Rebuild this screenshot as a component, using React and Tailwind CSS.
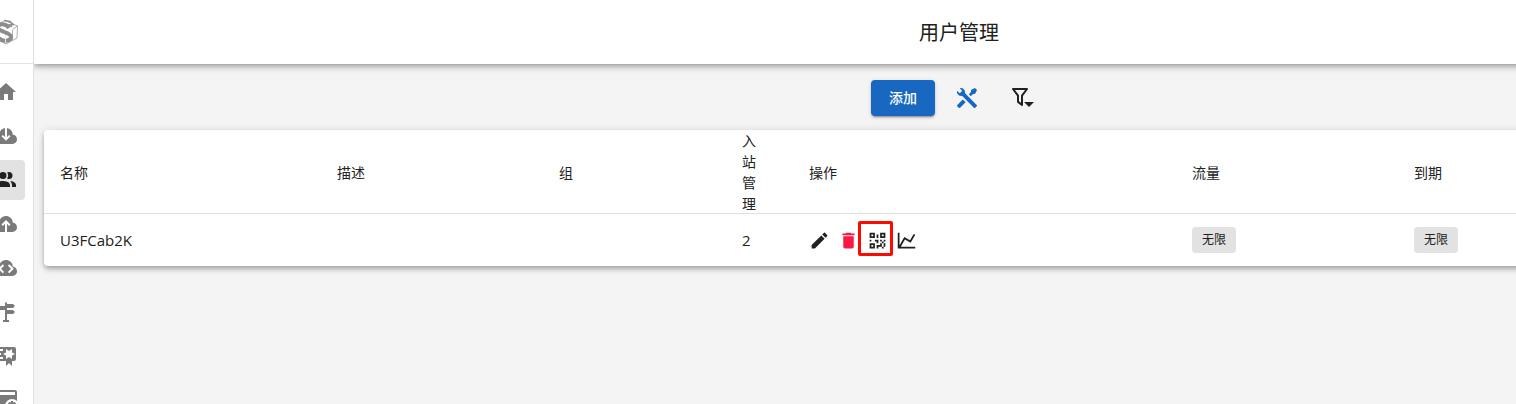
import React from "react";
import clsx from "clsx";

function Icon({ path, className = "size-6", children }) {
  return (
    <svg viewBox="0 0 24 24" fill="currentColor" className={clsx("block shrink-0", className)} aria-hidden="true">
      {path && <path d={path} />}
      {children}
    </svg>
  );
}

function CloudIcon({ mark }) {
  return (
    <Icon>
      <path d="M18.6 9.2C17.9 6.2 15.2 4 12 4C8.8 4 6.2 6.1 5.4 9.1C3 9.4 1 11.6 1 14.4A5.6 5.6 0 0 0 6.5 20H18.5A4.6 4.6 0 0 0 23 15.3C23 12.7 21.1 10.8 18.6 10.5Z" />
      <path d={mark} fill="none" stroke="#fff" strokeWidth="2" />
    </Icon>
  );
}

const navItems = [
  {
    label: "主页",
    icon: <Icon path="M10,20V14H14V20H19V12H22L12,3L2,12H5V20H10Z" />,
  },
  { label: "入站管理", icon: <CloudIcon mark="M12 3V15M8.2 11.6L12 15.4L15.8 11.6" /> },
  {
    label: "用户管理",
    active: true,
    icon: (
      <Icon path="M13.07 10.41A5 5 0 0 0 13.07 4.59A3.39 3.39 0 0 1 15 4A3.5 3.5 0 0 1 15 11A3.39 3.39 0 0 1 13.07 10.41M5.5 7.5A3.5 3.5 0 1 1 9 11A3.5 3.5 0 0 1 5.5 7.5M16 17V19H2V17S2 13 9 13 16 17 16 17M15.95 13A5.32 5.32 0 0 1 18 17V19H22V17S22 13.37 15.94 13Z" />
    ),
  },
  { label: "出站管理", icon: <CloudIcon mark="M12 21V10M8.2 13.2L12 9.4L15.8 13.2" /> },
  { label: "端点", icon: <CloudIcon mark="M9.4 9L5.6 12.8L9.4 16.6M14.6 9L18.4 12.8L14.6 16.6" /> },
  {
    label: "路由",
    icon: (
      <Icon path="M11,10H5L3,8L5,6H11V3L12,2L13,3V4H19L21,6L19,8H13V10H19L21,12L19,14H13V20H15V22H9V20H11V10Z" />
    ),
  },
  {
    label: "证书",
    icon: (
      <Icon path="M4,3C2.89,3 2,3.89 2,5V15A2,2 0 0,0 4,17H12V22L15,19L18,22V17H20A2,2 0 0,0 22,15V5A2,2 0 0,0 20,3H4M12,5L15,7L18,5V8.5L21,10L18,11.5V15L15,13L12,15V11.5L9,10L12,8.5V5M4,5H9V7H4V5M4,9H7V11H4V9M4,13H9V15H4V13Z" />
    ),
  },
  {
    label: "基本设置",
    icon: (
      <Icon>
        <path d="M3 2H21A2 2 0 0 1 23 4V20H1V4A2 2 0 0 1 3 2Z" />
        <path d="M3 4H21V7H3Z" fill="#fff" />
        <circle cx="18" cy="18" r="7" fill="#fff" />
        <path d="M17 13H19L19.4 14.6L21 14.1L22 15.8L20.8 17L22 18.2V22H14V18.2L15.2 17L14 15.8L15 14.1L16.6 14.6Z" />
        <circle cx="18" cy="18" r="1.5" fill="#fff" />
      </Icon>
    ),
  },
];

const columns = ["名称", "描述", "组", "入站管理", "操作", "流量", "到期"];

const users = [{ name: "U3FCab2K", desc: "", group: "", inbounds: 2, volume: "无限", expiry: "无限" }];

const actions = [
  {
    label: "编辑",
    path: "M20.71,7.04C21.1,6.65 21.1,6 20.71,5.63L18.37,3.29C18,2.9 17.35,2.9 16.96,3.29L15.12,5.12L18.87,8.87M3,17.25V21H6.75L17.81,9.93L14.06,6.18L3,17.25Z",
  },
  {
    label: "删除",
    danger: true,
    path: "M19,4H15.5L14.5,3H9.5L8.5,4H5V6H19M6,19A2,2 0 0,0 8,21H16A2,2 0 0,0 18,19V7H6V19Z",
  },
  {
    label: "二维码",
    marked: true,
    path: "M3,11H5V13H3V11M11,5H13V9H11V5M9,11H13V15H11V13H9V11M15,11H17V13H19V11H21V13H19V15H21V19H19V21H17V19H13V21H11V17H15V15H17V13H15V11M19,19V15H17V19H19M15,3H21V9H15V3M17,5V7H19V5H17M3,3H9V9H3V3M5,5V7H7V5H5M3,15H9V21H3V15M5,17V19H7V17H5Z",
  },
  {
    label: "图表",
    path: "M16,11.78L20.24,4.45L21.97,5.45L16.74,14.5L10.23,10.75L5.46,19H22V21H2V3H4V17.54L9.5,8L16,11.78Z",
  },
];

function Logo() {
  return (
    <svg viewBox="0 0 28 28" className="block size-7 shrink-0" fill="none" aria-hidden="true">
      {/* cube */}
      <g stroke="#9a9a9a" strokeWidth="0.8" strokeLinejoin="round">
        <path d="M13 2.5L25.5 8L25 20L14 26L3 20L2.5 8Z" />
        <path d="M20.5 11.5L25.5 8M20.5 12V22.5M13.5 15V26" />
      </g>
      <path d="M12 2.5L18 3.5L21 6.5L17.5 7L20 8.5" stroke="#8c8c8c" strokeWidth="1.6" />
      {/* ribbon on the front face */}
      <path
        d="M17 10C14 5.5 7 5 6 9C5 14 19 13.5 19 19C19 23 11 24.5 7 20"
        stroke="#8c8c8c"
        strokeWidth="4"
      />
      <path d="M13.5 17V25" stroke="#fff" strokeWidth="0.8" />
    </svg>
  );
}

function Sidebar() {
  return (
    // the rail is partly scrolled off the left edge
    <aside className="-ml-[22px] flex w-14 shrink-0 flex-col border-r border-[#e0e0e0] bg-white">
      <div className="flex h-16 shrink-0 items-center justify-center border-b border-[#e5e5e5]">
        <Logo />
      </div>
      <nav className="flex flex-col gap-1 p-2">
        {navItems.map((item) => (
          <a
            key={item.label}
            href="#"
            aria-label={item.label}
            className={clsx(
              "flex h-10 items-center rounded px-2",
              item.active ? "bg-[#e2e2e2] text-[#212121]" : "text-[#7a7a7a]"
            )}
          >
            {item.icon}
          </a>
        ))}
      </nav>
    </aside>
  );
}

function Toolbar() {
  return (
    <div className="flex items-center justify-center gap-2">
      <button
        type="button"
        className="h-9 w-16 rounded bg-[#1867c0] text-sm font-medium text-white shadow-[0_3px_1px_-2px_rgba(0,0,0,0.2),0_2px_2px_0_rgba(0,0,0,0.14),0_1px_5px_0_rgba(0,0,0,0.12)]"
      >
        添加
      </button>
      <button type="button" aria-label="工具" className="flex h-9 w-12 items-center justify-center text-[#1867c0]">
        <Icon path="M21.71 20.29L20.29 21.71A1 1 0 0 1 18.88 21.71L7 9.85A3.81 3.81 0 0 1 6 10A4 4 0 0 1 2.22 4.7L4.76 7.24L5.29 6.71L6.71 5.29L7.24 4.76L4.7 2.22A4 4 0 0 1 10 6A3.81 3.81 0 0 1 9.85 7L21.71 18.88A1 1 0 0 1 21.71 20.29M2.29 18.88A1 1 0 0 0 2.29 20.29L3.71 21.71A1 1 0 0 0 5.12 21.71L10.59 16.25L7.76 13.42M20 2L16 4V6L13.83 8.17L15.83 10.17L18 8H20L22 4Z" />
      </button>
      <button type="button" aria-label="筛选" className="flex h-9 w-12 items-center justify-center text-[#212121]">
        <Icon>
          <path
            d="M2 3H16L11 9.7V18.9L7 15.9V9.7Z"
            fill="none"
            stroke="currentColor"
            strokeWidth="2"
            strokeLinejoin="round"
          />
          <path d="M13 16H23L18 21Z" />
        </Icon>
      </button>
    </div>
  );
}

function Chip({ children }) {
  return <span className="inline-flex h-[26px] items-center rounded bg-[#e2e2e2] px-[10px] text-xs">{children}</span>;
}

function UserTable() {
  return (
    <div className="overflow-hidden rounded bg-white shadow-[0_2px_4px_-1px_rgba(0,0,0,0.2),0_4px_5px_0_rgba(0,0,0,0.14),0_1px_10px_0_rgba(0,0,0,0.12)]">
      <table className="w-full table-fixed text-left">
        <colgroup>
          <col className="w-[277px]" />
          <col className="w-[222px]" />
          <col className="w-[183px]" />
          <col className="w-[67px]" />
          <col className="w-[383px]" />
          <col className="w-[222px]" />
          <col />
        </colgroup>
        <thead>
          <tr className="text-sm leading-[21px]">
            {columns.map((col) => (
              <th key={col} scope="col" className="pr-6 pl-4 font-normal shadow-[inset_0_-1px_0_#e0e0e0]">
                {col}
              </th>
            ))}
          </tr>
        </thead>
        <tbody>
          {users.map((u) => (
            <tr key={u.name} className="h-[52px] text-[15px]">
              <td className="px-4">{u.name}</td>
              <td className="px-4">{u.desc}</td>
              <td className="px-4">{u.group}</td>
              <td className="px-4">{u.inbounds}</td>
              <td className="px-4">
                <div className="flex gap-2">
                  {actions.map((a) => (
                    <button
                      key={a.label}
                      type="button"
                      aria-label={a.label}
                      className={clsx("relative", a.danger && "text-[#ff1744]")}
                    >
                      <Icon path={a.path} className="size-[21px]" />
                      {a.marked && (
                        <span className="absolute -top-[9px] -left-[9px] size-[35px] rounded-xs border-3 border-[#ff0a00]" />
                      )}
                    </button>
                  ))}
                </div>
              </td>
              <td className="px-4">
                <Chip>{u.volume}</Chip>
              </td>
              <td className="px-4">
                <Chip>{u.expiry}</Chip>
              </td>
            </tr>
          ))}
        </tbody>
      </table>
    </div>
  );
}

export default function App() {
  return (
    <div className="flex h-screen overflow-hidden bg-[#f4f4f4] font-['Open_Sans','Noto_Sans_CJK_SC',sans-serif] text-[#212121]">
      <Sidebar />
      <div className="min-w-0 flex-1 overflow-hidden">
        <div className="min-w-[1850px]">
          <header className="flex h-16 items-center justify-center bg-white pt-0.5 shadow-[0_2px_4px_-1px_rgba(0,0,0,0.2),0_4px_5px_0_rgba(0,0,0,0.14),0_1px_10px_0_rgba(0,0,0,0.12)]">
            <h1 className="text-xl">用户管理</h1>
          </header>
          <main className="flex flex-col gap-[14px] px-[10px] py-4">
            <Toolbar />
            <UserTable />
          </main>
        </div>
      </div>
    </div>
  );
}
